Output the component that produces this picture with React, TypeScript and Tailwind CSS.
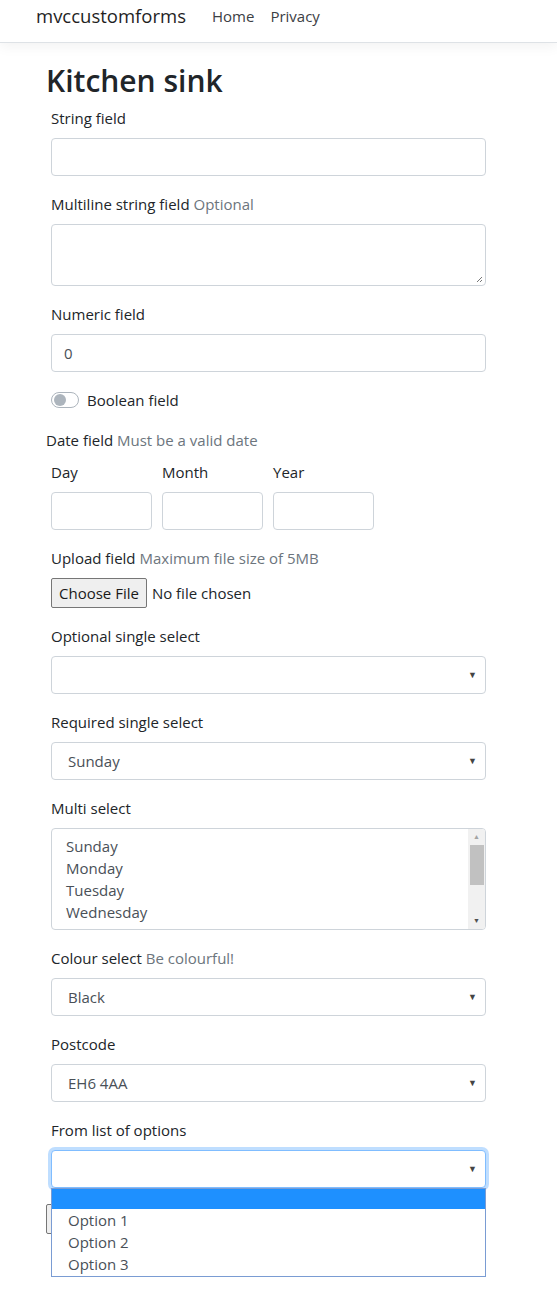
import React from 'react';

const inputCls = 'h-[38px] w-[435px] rounded-[4px] border border-[#ced4da] bg-white';

function Label({ text, hint }: { text: string; hint?: string }) {
  return (
    <div className="mb-2 h-6 leading-6 text-[#212529]">
      {text}
      {hint && <span className="text-[#6c757d]"> {hint}</span>}
    </div>
  );
}

function Select({ value, focused }: { value?: string; focused?: boolean }) {
  return (
    <div
      className={
        'flex h-[38px] w-[435px] items-center rounded-[4px] border bg-white pl-4 pr-2 text-[#495057] ' +
        (focused ? 'border-[#80bdff] shadow-[0_0_0_3px_rgba(0,123,255,0.25)]' : 'border-[#ced4da]')
      }
    >
      <span className="flex-1">{value}</span>
      <span className="text-[9px] text-[#444]">▼</span>
    </div>
  );
}

export default function App() {
  const days = ['Sunday', 'Monday', 'Tuesday', 'Wednesday', 'Thursday'];
  return (
    <div className="min-h-[1311px] bg-white font-['Open_Sans',sans-serif] text-[15px] text-[#212529]">
      <nav className="flex h-[43px] items-start border-b border-[#dee2e6] bg-white pl-9 pt-[3px] shadow-[0_4px_12px_rgba(0,0,0,0.05)]">
        <span className="mr-[26px] text-[18.5px] leading-[26px] text-[#1f1f1f]">mvccustomforms</span>
        <span className="mr-[16px] leading-[26px] text-[#3c4044]">Home</span>
        <span className="leading-[26px] text-[#3c4044]">Privacy</span>
      </nav>

      <main className="pl-[46px] pt-[18px]">
        <h1 className="mb-[5px] h-[40px] text-[30px] font-semibold leading-[40px] text-[#212529]">Kitchen sink</h1>

        <div className="pl-[5px]">
          <div className="mb-4">
            <Label text="String field" />
            <div className={inputCls} />
          </div>
          <div className="mb-4">
            <Label text="Multiline string field" hint="Optional" />
            <div className="relative h-[62px] w-[435px] rounded-[4px] border border-[#ced4da] bg-white">
              <svg className="absolute bottom-[2px] right-[2px]" width="7" height="7" viewBox="0 0 7 7">
                <path d="M6 1L1 6M6 4L4 6" stroke="#777" strokeWidth="1" />
              </svg>
            </div>
          </div>
          <div className="mb-4">
            <Label text="Numeric field" />
            <div className={inputCls + ' flex items-center pl-3 text-[#495057]'}>0</div>
          </div>
          <div className="mb-4 flex h-6 items-center">
            <div className="relative mr-2 h-4 w-7 rounded-full border border-[#adb5bd] bg-white">
              <div className="absolute left-[2px] top-[1px] h-3 w-3 rounded-full bg-[#adb5bd]" />
            </div>
            <span>Boolean field</span>
          </div>
        </div>

        <div className="mb-2 h-6 leading-6">
          Date field <span className="text-[#6c757d]">Must be a valid date</span>
        </div>

        <div className="pl-[5px]">
          <div className="mb-4 flex gap-[10px]">
            {['Day', 'Month', 'Year'].map((d) => (
              <div key={d}>
                <Label text={d} />
                <div className="h-[38px] w-[101px] rounded-[4px] border border-[#ced4da] bg-white" />
              </div>
            ))}
          </div>

          <div className="mb-4">
            <Label text="Upload field" hint="Maximum file size of 5MB" />
            <div className="flex h-[30px] items-center">
              <div className="flex h-[30px] items-center rounded-[2px] border border-[#767676] bg-[#efefef] px-[7px] text-[#1a1a1a]">
                Choose File
              </div>
              <span className="ml-[5px]">No file chosen</span>
            </div>
          </div>

          <div className="mb-4">
            <Label text="Optional single select" />
            <Select />
          </div>
          <div className="mb-4">
            <Label text="Required single select" />
            <Select value="Sunday" />
          </div>
          <div className="mb-4">
            <Label text="Multi select" />
            <div className="relative h-[102px] w-[435px] overflow-hidden rounded-[4px] border border-[#ced4da] bg-white">
              <div className="pl-[14px] pt-[6px] leading-[22px] text-[#495057]">
                {days.map((d) => (
                  <div key={d}>{d}</div>
                ))}
              </div>
              <div className="absolute bottom-0 right-0 top-0 flex w-[17px] flex-col items-center bg-[#f1f1f1]">
                <span className="mt-[2px] text-[7px] leading-[12px] text-[#a3a3a3]">▲</span>
                <div className="mt-[2px] h-[40px] w-[14px] bg-[#c1c1c1]" />
                <div className="flex-1" />
                <span className="mb-[2px] text-[7px] leading-[12px] text-[#505050]">▼</span>
              </div>
            </div>
          </div>
          <div className="mb-4">
            <Label text="Colour select" hint="Be colourful!" />
            <Select value="Black" />
          </div>
          <div className="mb-4">
            <Label text="Postcode" />
            <Select value="EH6 4AA" />
          </div>
          <div className="relative mb-4">
            <Label text="From list of options" />
            <Select focused />
            <div className="absolute left-0 top-[70px] z-10 w-[435px] border border-[#7a9cd3] bg-white text-[#495057]">
              <div className="h-[20px] bg-[#1e90ff]" />
              <div className="pb-[1px] pl-4 leading-[22px]">
                <div>Option 1</div>
                <div>Option 2</div>
                <div>Option 3</div>
              </div>
            </div>
          </div>
        </div>

        <div className="h-[30px] w-[70px] rounded-[2px] border border-[#767676] bg-[#efefef]" />
      </main>
    </div>
  );
}
